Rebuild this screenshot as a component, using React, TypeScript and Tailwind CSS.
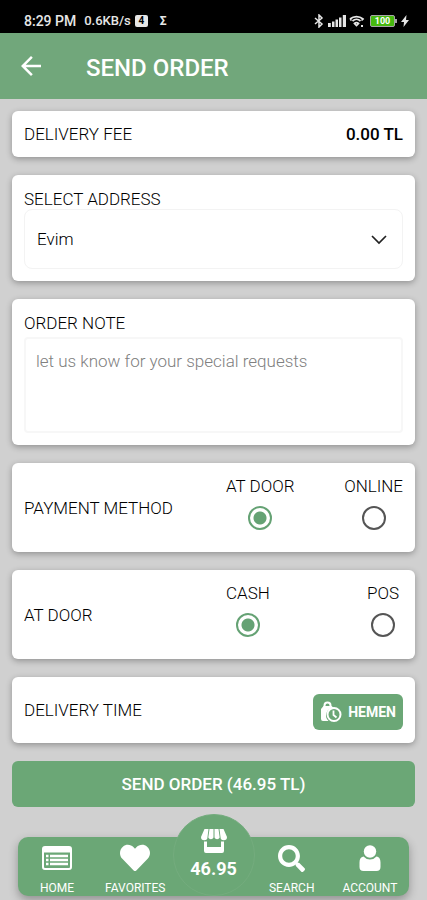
import React, { useState } from 'react';
import { FaHeart, FaSearch } from 'react-icons/fa';
import { MdArrowBack } from 'react-icons/md';

interface CardProps {
  className: string;
  children: React.ReactNode;
}

const Card: React.FC<CardProps> = ({ className, children }) => (
  <section className={`rounded-md bg-white px-3 shadow-[0_2px_6px_rgba(0,0,0,0.3)] ${className}`}>
    {children}
  </section>
);

interface ChoiceProps {
  name: string;
  label: string;
  checked: boolean;
  onSelect: () => void;
}

const Choice: React.FC<ChoiceProps> = ({ name, label, checked, onSelect }) => (
  <label className="flex flex-col items-center gap-[10px]">
    <span>{label}</span>
    <input
      type="radio"
      name={name}
      checked={checked}
      onChange={onSelect}
      className="h-6 w-6 appearance-none rounded-full border-2 border-[#555555] checked:border-[#65a274] checked:bg-[radial-gradient(circle,#65a274_6px,transparent_7px)]"
    />
  </label>
);

const StatusBar: React.FC = () => (
  <div className="flex h-[33px] items-end justify-between bg-black pb-[2px] pl-6 pr-[18px] text-sm leading-5 font-medium text-[#e6e6e6]">
    <div className="flex items-center">
      <span>8:29 PM</span>
      <span className="ml-2 text-[13px]">0.6KB/s</span>
      <span className="ml-1 flex h-3 w-[13px] items-center justify-center rounded-xs bg-[#e6e6e6] text-[10px] font-bold text-black">4</span>
      <span className="ml-3 text-xs font-bold">Σ</span>
    </div>
    <div className="flex h-5 items-center">
      <svg viewBox="0 0 10 14" className="h-[14px] w-[10px]" fill="none" stroke="currentColor" strokeWidth="1.5">
        <path d="M1 4l7 6-3 3V1l3 3-7 6" />
      </svg>
      <svg viewBox="0 0 18 12" className="ml-1 h-3 w-[18px]" fill="currentColor">
        <path d="M0 8h2.800v4H0zM4 6.500h2.500V12H4zM7.500 4.500H10V12H7.500zM11 2.500h2.500V12H11zM14.800 0H18v12h-3.200z" />
      </svg>
      <svg viewBox="0 0 16 14" className="ml-[3px] h-[14px] w-4" fill="none" stroke="currentColor" strokeWidth="1.700">
        <path d="M1 5a10 10 0 0 1 13 0L12.500 6.500M1 5l1.500 1.500M3.500 7a6 6 0 0 1 8 0M5.500 9.500a3 3 0 0 1 4 0L7.500 11.500z" />
        <path d="M12 12h2" strokeWidth="2" />
      </svg>
      <span className="ml-[5px] flex h-3 w-[25px] items-center justify-center rounded-xs border border-[#a5a5a5] bg-[#46b80f] text-[9px] font-bold text-white">100</span>
      <span className="h-1 w-[2px] bg-[#a5a5a5]" />
      <svg viewBox="0 0 8 12" className="ml-1 h-3 w-2" fill="currentColor">
        <path d="M5.500 0 0 7h3L2.500 12 8 5H5z" />
      </svg>
    </div>
  </div>
);

const ListIcon: React.FC = () => (
  <svg viewBox="0 0 30 24" className="h-6 w-[30px]" fill="none" stroke="currentColor">
    <rect x="1" y="1" width="28" height="22" rx="2" strokeWidth="2" />
    <path d="M1 4h28" strokeWidth="5" />
    <path d="M4 10h2.500M8 10h18M4 14h2.500M8 14h18M4 18h2.500M8 18h18" strokeWidth="2.500" />
  </svg>
);

const ShopIcon: React.FC = () => (
  <svg viewBox="0 0 28 24" className="h-6 w-7" fill="currentColor">
    <path d="M4.500 0h4L7.500 8a3.200 3.200 0 0 1-6.500 0zM9.500 0h4v8.500a2.800 2.800 0 0 1-5.200 0zM14.500 0h4l1.200 8.500a2.800 2.800 0 0 1-5.200 0zM19.500 0h4L27 8a3.200 3.200 0 0 1-6.500 0z" />
    <path d="M4 12.500h3V18h14v-5.500h3V22a2 2 0 0 1-2 2H6a2 2 0 0 1-2-2z" />
  </svg>
);

const AccountIcon: React.FC = () => (
  <svg viewBox="0 0 22 26" className="h-[26px] w-[22px]" fill="currentColor">
    <circle cx="11" cy="6.500" r="6.200" />
    <path d="M4.500 11.500a8.500 8.500 0 0 0 13 0c3 .5 4 3 4 6V22a4 4 0 0 1-4 4h-13a4 4 0 0 1-4-4v-4.500c0-3 1-5.500 4-6z" />
  </svg>
);

const BagClockIcon: React.FC = () => (
  <svg viewBox="0 0 22 22" className="h-[22px] w-[22px]" fill="none" stroke="currentColor">
    <path d="M4.500 6.500V4.500a3 3 0 0 1 6 0v2" strokeWidth="2" />
    <path d="M3.500 5h8l2.500 2A7.500 7.500 0 0 0 8.500 20H3a2 2 0 0 1-2-2V8z" fill="currentColor" stroke="none" />
    <circle cx="14" cy="13.500" r="6.500" strokeWidth="2" />
    <path d="M13.500 9.500V14l3 2.500" strokeWidth="1.800" />
  </svg>
);

interface NavItemProps {
  label: string;
  children: React.ReactNode;
}

const NavItem: React.FC<NavItemProps> = ({ label, children }) => (
  <a href="#" className="flex flex-1 flex-col items-center justify-between pt-2">
    <span className="flex h-[26px] items-center">{children}</span>
    <span className="text-xs leading-4">{label}</span>
  </a>
);

const App: React.FC = () => {
  const [payment, setPayment] = useState('door');
  const [method, setMethod] = useState('cash');

  return (
    <div className="flex min-h-screen flex-col bg-[#d0d0d0] font-[Roboto,sans-serif] text-[17px] leading-5 font-light text-black">
      <StatusBar />

      {/* Header */}
      <header className="flex h-[66px] items-center bg-[#71a77b] px-4 text-white">
        <button type="button" aria-label="Back">
          <MdArrowBack className="h-[30px] w-[30px]" />
        </button>
        <h1 className="ml-10 pt-1 text-2xl leading-6 font-medium">SEND ORDER</h1>
      </header>

      <main className="flex flex-col gap-[18px] px-3 pt-3">
        <Card className="flex h-[46px] items-center justify-between">
          <span>DELIVERY FEE</span>
          <span className="font-medium">0.00 TL</span>
        </Card>

        <Card className="pt-[14px] pb-3">
          <label htmlFor="address" className="block">SELECT ADDRESS</label>
          <div className="relative">
            <select
              id="address"
              className="block h-[60px] w-full appearance-none rounded-lg border border-[#f3f3f3] bg-white px-3"
            >
              <option>Evim</option>
            </select>
            <svg viewBox="0 0 16 10" className="pointer-events-none absolute right-4 top-[26px] h-[10px] w-4" fill="none" stroke="#222222" strokeWidth="1.700">
              <path d="m1 1 7 7 7-7" />
            </svg>
          </div>
        </Card>

        <Card className="pt-[14px] pb-3">
          <label htmlFor="note" className="block">ORDER NOTE</label>
          <textarea
            id="note"
            placeholder="let us know for your special requests"
            className="mt-1 block h-24 w-full resize-none rounded-sm border-2 border-[#f7f7f7] px-[10px] py-3 placeholder:text-[#808080]"
          />
        </Card>

        <Card className="flex h-[89px] items-center justify-between">
          <span className="w-[202px]">PAYMENT METHOD</span>
          <div className="flex flex-1 justify-between pb-[10px]">
            <Choice name="payment" label="AT DOOR" checked={payment === 'door'} onSelect={() => setPayment('door')} />
            <Choice name="payment" label="ONLINE" checked={payment === 'online'} onSelect={() => setPayment('online')} />
          </div>
        </Card>

        <Card className="flex h-[89px] items-center justify-between">
          <span className="w-[202px]">AT DOOR</span>
          <div className="flex flex-1 justify-between pr-1 pb-[10px]">
            <Choice name="method" label="CASH" checked={method === 'cash'} onSelect={() => setMethod('cash')} />
            <Choice name="method" label="POS" checked={method === 'pos'} onSelect={() => setMethod('pos')} />
          </div>
        </Card>

        <Card className="flex h-[66px] items-center justify-between">
          <span>DELIVERY TIME</span>
          <button type="button" className="mt-1 flex h-9 items-center gap-[6px] rounded-md bg-[#6ba776] px-[7px] text-sm font-bold text-white">
            <BagClockIcon />
            HEMEN
          </button>
        </Card>

        <button type="button" className="h-[46px] rounded-md bg-[#6ba776] font-medium text-white">
          SEND ORDER (46.95 TL)
        </button>
      </main>

      {/* Bottom navigation */}
      <nav className="mx-[18px] mt-[30px] mb-1 flex h-[59px] rounded-[10px] bg-[#6ba776] font-normal text-white shadow-[0_4px_10px_rgba(0,0,0,0.3)]">
        <NavItem label="HOME"><ListIcon /></NavItem>
        <NavItem label="FAVORITES"><FaHeart className="h-[30px] w-[30px]" /></NavItem>
        <div className="flex min-w-0 flex-1 justify-center">
          <a href="#" className="-mt-[23px] flex h-[82px] w-[82px] shrink-0 flex-col items-center gap-1 rounded-full border border-[#74ac7e] bg-[#6ba776] pt-[14px] text-lg leading-6 font-bold">
            <ShopIcon />
            46.95
          </a>
        </div>
        <NavItem label="SEARCH"><FaSearch className="h-[27px] w-[27px]" /></NavItem>
        <NavItem label="ACCOUNT"><AccountIcon /></NavItem>
      </nav>
    </div>
  );
};

export default App;
